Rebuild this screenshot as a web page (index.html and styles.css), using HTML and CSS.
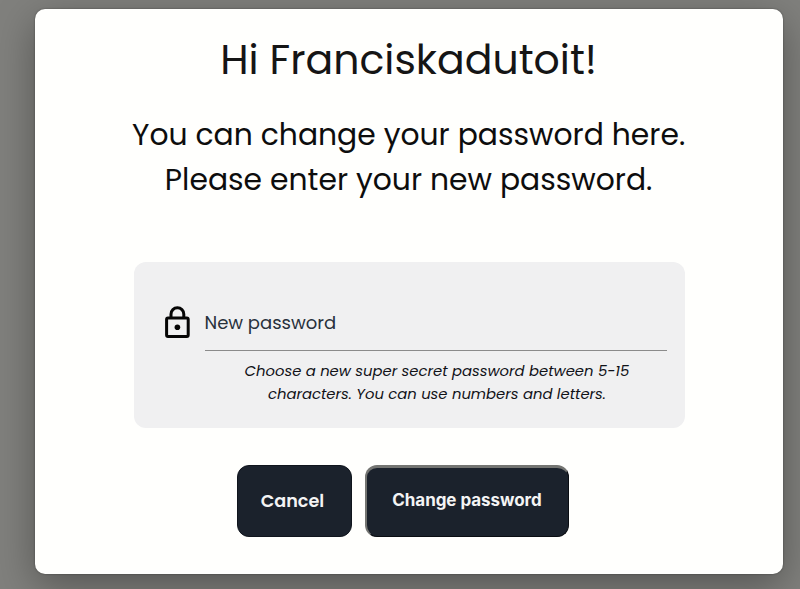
FILE: index.html
```html
<!DOCTYPE html>
<html lang="en">
<head>
<meta charset="utf-8">
<title>Change password</title>
<link rel="stylesheet" href="styles.css">
</head>
<body>
<main class="dialog">
  <h1 class="title">Hi Franciskadutoit!</h1>
  <p class="intro">You can change your password here.<br>Please enter your new password.</p>
  <form class="form">
    <div class="field-card">
      <svg class="lock" viewBox="0 0 26 34" fill="none" stroke="#050505" stroke-width="3">
        <rect x="1.6" y="12" width="21.6" height="18.4" rx="1.4"/>
        <path d="M6 12V8.2a6.4 6.4 0 0 1 12.8 0V12"/>
        <circle cx="12.4" cy="21.2" r="2.8" fill="#050505" stroke="none"/>
      </svg>
      <div class="field">
        <label class="label">New password</label>
        <p class="hint">Choose a new super secret password between 5-15<br>characters. You can use numbers and letters.</p>
      </div>
    </div>
    <div class="actions">
      <button type="button" class="button cancel">Cancel</button>
      <button type="button" class="button change">Change password</button>
    </div>
  </form>
</main>
</body>
</html>
```
FILE: styles.css
```css
* { box-sizing: border-box; }
body {
  margin: 0;
  height: 589px;
  overflow: hidden;
  padding: 9px 17px 0 34.6px;
  background: #80807d;
  color: #151515;
  font-family: Poppins, Inter, sans-serif;
}
.dialog {
  width: 748px;
  height: 565px;
  padding-top: 20px;
  border-radius: 10px;
  background: #fffffd;
  box-shadow: 0 0 2px rgba(0,0,0,.4), 0 12px 40px rgba(0,0,0,.34);
  text-align: center;
}
h1, p { margin: 0; font-weight: 400; white-space: nowrap; }
.title { font-size: 41px; line-height: 62px; }
.intro { margin-top: 21px; color: #0d0d0d; font-size: 29.8px; line-height: 45px; }
.form { width: 551px; margin: 60px 0 0 99.4px; }
.field-card {
  display: flex;
  height: 166px;
  padding: 44px 18px 0 31px;
  border-radius: 12px;
  background: #f0f0f1;
}
.lock { width: 26px; height: 34px; margin-right: 14px; flex: none; }
.field { flex: 1; }
.label {
  display: block;
  height: 45px;
  border-bottom: 1px solid #8b8b8b;
  color: #28313c;
  font-size: 18px;
  line-height: 33px;
  text-align: left;
  text-indent: -0.5px;
}
.hint {
  margin-top: 8px;
  padding-left: 2px;
  color: #101218;
  font-size: 14.8px;
  font-style: italic;
  line-height: 23px;
}
.actions { display: flex; justify-content: center; gap: 13px; margin-top: 37px; padding-right: 13px; }
.button {
  height: 72px;
  padding: 0;
  border-radius: 12px;
  background: #1b222c;
  color: #f4f4f4;
  font-family: inherit;
  font-size: 17px;
  font-weight: 600;
  white-space: nowrap;
}
.cancel {
  width: 115px;
  padding: 0 4px 1px 0;
  border: 1px solid #10151d;
  font-size: 17.6px;
}
.change {
  width: 204px;
  padding: 0 1px 4px 0;
  border: 1px solid #0a0d12;
  border-top: 3px solid #747572;
  border-left: 2px solid #747572;
  font-family: Inter, sans-serif;
  font-weight: 650;
  letter-spacing: -0.05px;
}
```
